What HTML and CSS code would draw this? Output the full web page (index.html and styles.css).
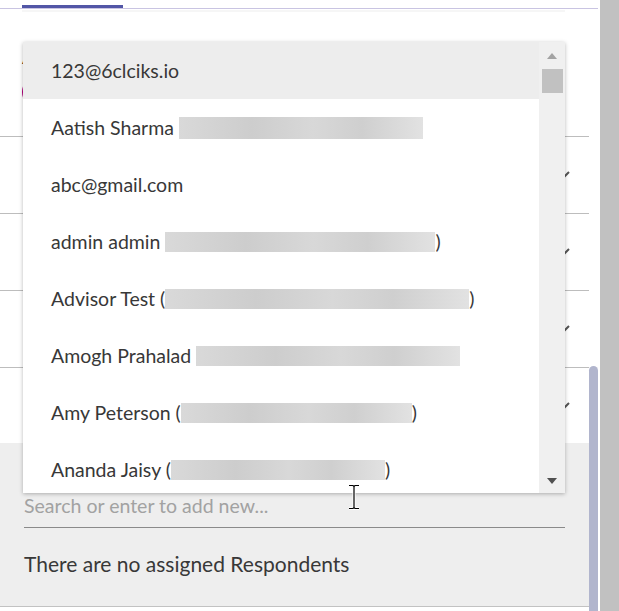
FILE: index.html
```html
<!DOCTYPE html>
<html lang="en">
<head>
<meta charset="utf-8">
<title>Assign respondents</title>
<link rel="stylesheet" href="styles.css">
</head>
<body>
<div class="screen">
  <div class="left">
    <div class="tabs"><div class="tab-active"></div></div>
    <div class="body">
      <div class="main">
        <div class="tab-shadow"></div>
        <section class="assignee">
          <div class="label">A</div>
          <div class="avatar"></div>
        </section>
        <div class="row"><svg class="chev" viewBox="0 0 12 8"><path d="M1 1l5 5 5-5" fill="none" stroke="#555" stroke-width="2"/></svg></div>
        <div class="row"><svg class="chev" viewBox="0 0 12 8"><path d="M1 1l5 5 5-5" fill="none" stroke="#555" stroke-width="2"/></svg></div>
        <div class="row"><svg class="chev" viewBox="0 0 12 8"><path d="M1 1l5 5 5-5" fill="none" stroke="#555" stroke-width="2"/></svg></div>
        <div class="row last"><svg class="chev" viewBox="0 0 12 8"><path d="M1 1l5 5 5-5" fill="none" stroke="#555" stroke-width="2"/></svg></div>
        <section class="respondents">
          <input class="search" type="text" placeholder="Search or enter to add new...">
          <p class="empty">There are no assigned Respondents</p>
        </section>
      </div>
      <div class="panel-scroll"><div class="panel-thumb"></div></div>
    </div>
  </div>
  <div class="gap"></div>
  <div class="page-track"></div>
</div>

<div class="dropdown">
  <ul class="options">
    <li class="option active">123@6clciks.io</li>
    <li class="option">Aatish Sharma <span class="blur b1"></span></li>
    <li class="option">abc@gmail.com</li>
    <li class="option">admin admin <span class="blur b2"></span>)</li>
    <li class="option">Advisor Test (<span class="blur b3"></span>)</li>
    <li class="option">Amogh Prahalad <span class="blur b4"></span></li>
    <li class="option">Amy Peterson (<span class="blur b5"></span>)</li>
    <li class="option">Ananda Jaisy (<span class="blur b6"></span>)</li>
  </ul>
  <div class="dd-scroll">
    <span class="arrow up"></span>
    <span class="dd-thumb"></span>
    <span class="dd-spacer"></span>
    <span class="arrow down"></span>
  </div>
</div>

<svg class="cursor" viewBox="0 0 14 26" width="14" height="26">
  <path d="M2 1.5h4l1 1 1-1h4M7 2.5v21M2 24.5h4l1-1 1 1h4" fill="none" stroke="#fff" stroke-width="3"/>
  <path d="M2 1.5h4l1 1 1-1h4M7 2.5v21M2 24.5h4l1-1 1 1h4" fill="none" stroke="#000" stroke-width="1.2"/>
</svg>
</body>
</html>
```

FILE: styles.css
```css
* { box-sizing: border-box; }
html, body { margin: 0; padding: 0; }
body {
  width: 619px;
  height: 611px;
  overflow: hidden;
  background: #fff;
  font-family: Lato, "Open Sans", "Liberation Sans", sans-serif;
  color: #333;
  position: relative;
}

.screen { display: flex; height: 611px; }
.left { width: 598px; display: flex; flex-direction: column; }
.tabs {
  height: 9px;
  border-bottom: 1px solid #c9c4e2;
  padding: 5px 0 0 22px;
}
.tab-active { width: 101px; height: 3px; background: #5256a6; }
.body { flex: 1; display: flex; }
.main { width: 589px; display: flex; flex-direction: column; }
.tab-shadow { height: 2px; margin: 1px 24px 0 22px; background: #f6f6f6; }
.panel-scroll { width: 9px; padding-top: 357px; }
.panel-thumb { height: 100%; background: #b1b5cd; border-radius: 5px 5px 0 0; }
.gap { width: 2px; }
.page-track { width: 19px; background: #c1c1c1; }

.assignee { height: 124px; padding: 37px 22px 0; }
.label { font-size: 16px; line-height: 18px; color: #222; }
.avatar { width: 32px; height: 32px; border-radius: 50%; background: #b3007c; margin-top: 9px; }

.row {
  height: 77px;
  border-top: 1px solid #bdbdbd;
  display: flex;
  align-items: center;
  justify-content: flex-end;
  padding-right: 19px;
}
.row.last { height: 76px; }
.chev { width: 12px; height: 8px; }

.respondents {
  flex: 1;
  background: #eeeeee;
  padding: 48px 24px 0;
  border-bottom: 1px solid #c2c2c2;
  margin-bottom: 4px;
}
.search {
  display: block;
  width: 100%;
  height: 37px;
  border: 0;
  border-bottom: 1px solid #8a8a8a;
  background: transparent;
  padding: 0 0 8px;
  font-family: inherit;
  font-size: 19.5px;
  color: #333;
  outline: none;
}
.search::placeholder { color: #a2a2a2; }
.empty { margin: 24px 0 0; font-size: 21px; line-height: 24px; color: #383838; }

.dropdown {
  position: absolute;
  left: 23px;
  top: 42px;
  width: 542px;
  height: 451px;
  background: #fff;
  box-shadow: 0 1px 4px rgba(0,0,0,0.28);
  display: flex;
  overflow: hidden;
}
.options { flex: 1; margin: 0; padding: 0; list-style: none; overflow: hidden; }
.option {
  height: 57px;
  display: flex;
  align-items: center;
  padding-left: 28px;
  font-size: 19.5px;
  color: #383838;
  white-space: pre;
}
.option.active { background: #ededed; }
.blur {
  display: inline-block;
  height: 22px;
  background: linear-gradient(90deg, #d9d9d9, #cdcdcd 30%, #d8d8d8 55%, #cfcfcf 75%, #e2e2e2);
}
.b1 { width: 244px; }
.b2 { width: 270px; height: 20px; }
.b3 { width: 304px; height: 20px; }
.b4 { width: 264px; height: 20px; }
.b5 { width: 231px; height: 20px; }
.b6 { width: 214px; height: 20px; }

.dd-scroll {
  width: 26px;
  background: #f0f0f0;
  display: flex;
  flex-direction: column;
  align-items: center;
  padding: 11px 0 9px;
}
.arrow { width: 0; height: 0; border-left: 5px solid transparent; border-right: 5px solid transparent; }
.arrow.up { border-bottom: 6px solid #a3a3a3; }
.arrow.down { border-top: 6px solid #505050; }
.dd-thumb { width: 21px; height: 24px; background: #c1c1c1; margin-top: 10px; }
.dd-spacer { flex: 1; }

.cursor { position: absolute; left: 347px; top: 484px; }
```
